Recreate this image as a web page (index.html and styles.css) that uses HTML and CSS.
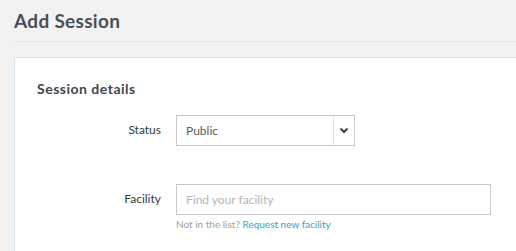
FILE: index.html
```html
<!DOCTYPE html>
<html>
<head>
<meta charset="utf-8">
<link rel="stylesheet" href="styles.css">
</head>
<body>
<div class="page">
  <header class="page-header">
    <h1 class="page-title">Add Session</h1>
  </header>
  <section class="card">
    <h2 class="card-title">Session details</h2>
    <div class="form-row status-row">
      <label class="form-label">Status</label>
      <div class="select">
        <span class="select-value">Public</span>
        <span class="select-toggle">
          <svg width="10" height="7" viewBox="0 0 10 7"><path d="M1.5 1.5 L5 5 L8.5 1.5" fill="none" stroke="#3b4148" stroke-width="2"/></svg>
        </span>
      </div>
    </div>
    <div class="form-row facility-row">
      <label class="form-label">Facility</label>
      <div class="field">
        <div class="text-input"><span class="placeholder">Find your facility</span></div>
        <div class="help">Not in the list? <a class="help-link">Request new facility</a></div>
      </div>
    </div>
  </section>
</div>
</body>
</html>
```

FILE: styles.css
```css
html, body {
  margin: 0;
  padding: 0;
  background: #f2f2f2;
  overflow: hidden;
}
body {
  font-family: "Lato", "Noto Sans", sans-serif;
  width: 516px;
  height: 251px;
}
.page {
  padding: 0 0 0 14px;
}
.page-header {
  height: 42px;
  border-bottom: 1px solid #e7e7e7;
  box-sizing: border-box;
  display: flex;
  align-items: center;
}
.page-title {
  margin: 0;
  font-size: 19px;
  font-weight: 700;
  color: #4a4f56;
  letter-spacing: 0.3px;
}
.card {
  margin-top: 15px;
  margin-right: -20px;
  background: #fff;
  border: 1px solid #d6e3ee;
  border-bottom: none;
  height: 194px;
  padding: 22px 0 0 22px;
  box-sizing: border-box;
}
.card-title {
  margin: 0;
  font-size: 14px;
  font-weight: 700;
  color: #3f464e;
  letter-spacing: 0.5px;
}
.form-row {
  display: grid;
  grid-template-columns: 124px auto;
  column-gap: 15px;
}
.status-row {
  margin-top: 18px;
}
.facility-row {
  margin-top: 38px;
}
.form-label {
  text-align: right;
  font-size: 12px;
  color: #333a40;
  padding-top: 7px;
}
.select {
  width: 179px;
  height: 31px;
  box-sizing: border-box;
  border: 1px solid #c8c8c8;
  display: flex;
  align-items: center;
}
.select-value {
  flex: 1;
  padding-left: 9px;
  font-size: 12px;
  color: #555b61;
}
.select-toggle {
  width: 20px;
  height: 29px;
  border-left: 1px solid #e2e2e2;
  display: flex;
  align-items: center;
  justify-content: center;
}
.text-input {
  width: 315px;
  height: 31px;
  box-sizing: border-box;
  border: 1px solid #c8c8c8;
  display: flex;
  align-items: center;
  padding-left: 9px;
}
.placeholder {
  font-size: 12px;
  color: #b0b4b8;
}
.help {
  margin-top: 3px;
  font-size: 10px;
  color: #9aa0a5;
}
.help-link {
  color: #2aa5d8;
}
```
